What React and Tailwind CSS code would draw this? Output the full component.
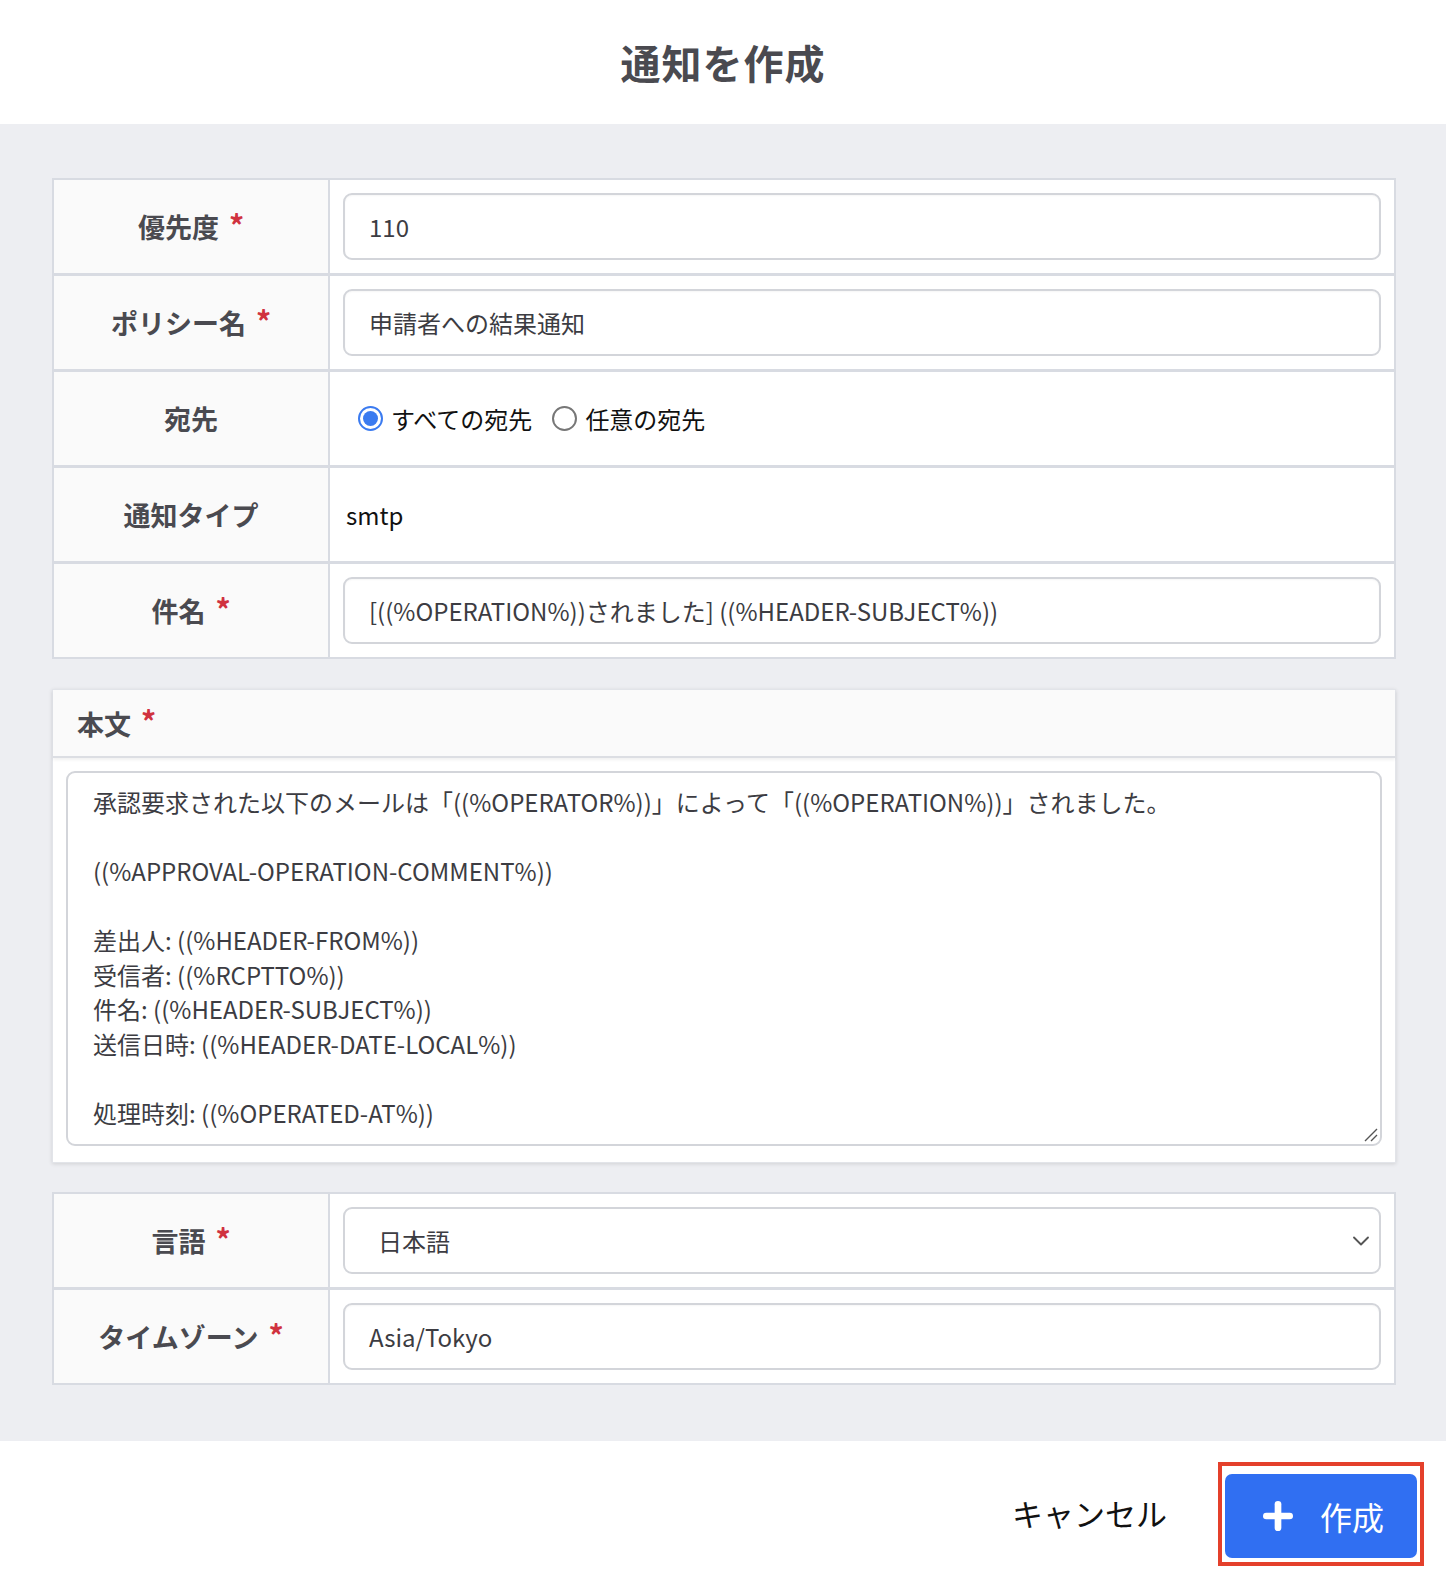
import { Plus, ChevronDown } from "lucide-react";

const FONT = { fontFamily: "'Noto Sans CJK JP', 'Noto Sans', sans-serif" };

const Star = () => (
  <span className="text-[30px] font-bold text-[#d0323f] ml-[10px] -mt-[6px] leading-none">*</span>
);

const Label = ({ children, required }) => (
  <div className="w-[276px] shrink-0 bg-[#fafafa] border-r-2 border-[#d8dbe2] flex items-center justify-center">
    <span className="text-[27px] font-bold text-[#4a4a50] leading-none">{children}</span>
    {required && <Star />}
  </div>
);

const Input = ({ value }) => (
  <div className="flex-1 mx-[13px] h-[67px] rounded-[9px] border-2 border-[#d3d5da] bg-white flex items-center px-[24px] text-[24px] text-[#3c3c42] shadow-[inset_0_1px_2px_rgba(0,0,0,0.04)]">
    {value}
  </div>
);

const Row = ({ label, required, children, first }) => (
  <div className={`flex bg-white ${first ? "h-[93px]" : "h-[96px] border-t-[3px] border-[#d8dbe2]"}`}>
    <Label required={required}>{label}</Label>
    <div className="flex-1 flex items-center">{children}</div>
  </div>
);

const bodyLines = [
  "承認要求された以下のメールは「((%OPERATOR%))」によって「((%OPERATION%))」されました。",
  "",
  "((%APPROVAL-OPERATION-COMMENT%))",
  "",
  "差出人: ((%HEADER-FROM%))",
  "受信者: ((%RCPTTO%))",
  "件名: ((%HEADER-SUBJECT%))",
  "送信日時: ((%HEADER-DATE-LOCAL%))",
  "",
  "処理時刻: ((%OPERATED-AT%))",
];

export default function App() {
  return (
    <div className="w-full min-h-[1572px] bg-white flex flex-col" style={FONT}>
      {/* Header */}
      <div className="h-[124px] flex items-center justify-center bg-white">
        <h1 className="text-[40px] font-bold text-[#4a4a50] tracking-[1px]">通知を作成</h1>
      </div>

      {/* Body */}
      <div className="bg-[#edeef2] pl-[52px] pr-[50px] pt-[54px] pb-[56px] flex flex-col">
        <div className="border-2 border-[#d8dbe2] bg-white">
          <Row label="優先度" required first><Input value="110" /></Row>
          <Row label="ポリシー名" required><Input value="申請者への結果通知" /></Row>
          <Row label="宛先">
            <div className="flex items-center pl-[28px] text-[24px] text-[#111]">
              <span className="w-[25px] h-[25px] rounded-full border-2 border-[#3b7bf0] flex items-center justify-center">
                <span className="w-[15px] h-[15px] rounded-full bg-[#3b7bf0]" />
              </span>
              <span className="ml-[8px]">すべての宛先</span>
              <span className="ml-[20px] w-[25px] h-[25px] rounded-full border-2 border-[#777]" />
              <span className="ml-[8px]">任意の宛先</span>
            </div>
          </Row>
          <Row label="通知タイプ">
            <span className="pl-[16px] text-[24px] text-[#111]">smtp</span>
          </Row>
          <Row label="件名" required><Input value="[((%OPERATION%))されました] ((%HEADER-SUBJECT%))" /></Row>
        </div>

        {/* 本文 */}
        <div className="mt-[30px] bg-white border border-[#e2e4e9] shadow-[0_1px_4px_rgba(0,0,0,0.12)]">
          <div className="h-[68px] bg-[#fafafa] flex items-center pl-[24px] border-b-2 border-[#dcdee3] shadow-[0_2px_3px_rgba(0,0,0,0.06)]">
            <span className="text-[27px] font-bold text-[#4a4a50] leading-none">本文</span>
            <Star />
          </div>
          <div className="px-[13px] pt-[13px] pb-[16px]">
            <div className="relative h-[375px] rounded-[9px] border-2 border-[#d3d5da] px-[25px] pt-[12px] text-[24px] text-[#3c3c42] leading-[34.5px]">
              {bodyLines.map((l, i) => (
                <div key={i} className="h-[34.5px] whitespace-pre">{l}</div>
              ))}
              <svg className="absolute right-[2px] bottom-[2px]" width="16" height="16" viewBox="0 0 16 16">
                <path d="M15 3 L3 15 M15 9 L9 15" stroke="#555" strokeWidth="1.4" />
              </svg>
            </div>
          </div>
        </div>

        <div className="mt-[29px] border-2 border-[#d8dbe2] bg-white">
          <Row label="言語" required first>
            <div className="flex-1 mx-[13px] h-[67px] rounded-[9px] border-2 border-[#d3d5da] bg-white flex items-center justify-between pl-[33px] pr-[4px] text-[24px] text-[#3c3c42]">
              <span>日本語</span>
              <ChevronDown size={28} strokeWidth={1.6} color="#555" />
            </div>
          </Row>
          <Row label="タイムゾーン" required><Input value="Asia/Tokyo" /></Row>
        </div>
      </div>

      {/* Footer */}
      <div className="h-[135px] bg-white flex items-center justify-end pr-[22px]">
        <span className="text-[31px] text-[#111] mr-[51px] mt-[10px]">キャンセル</span>
        <div className="border-[4px] border-[#e4402b] px-[3px] pt-[8px] pb-[4px] mt-[10px]">
          <button className="w-[192px] h-[84px] rounded-[7px] bg-[#306ff2] flex items-center justify-center gap-[22px] text-white text-[32px]">
            <Plus size={40} strokeWidth={4} />
            <span>作成</span>
          </button>
        </div>
      </div>
    </div>
  );
}
